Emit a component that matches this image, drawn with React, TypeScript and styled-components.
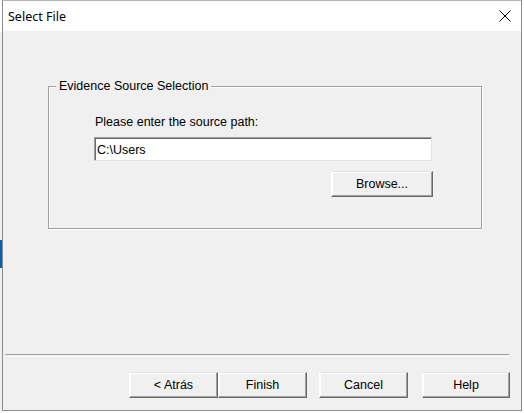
import React from 'react'
import styled, { createGlobalStyle } from 'styled-components'

const Global = createGlobalStyle`
  html, body {
    margin: 0;
    padding: 0;
    background: #fff;
  }
  body {
    font-family: "Liberation Sans", Arial, sans-serif;
    font-size: 12.5px;
    color: #000;
  }
`

const Screen = styled.div`
  display: flex;
  width: 524px;
  height: 413px;
  overflow: hidden;
`

/* the edge of the window behind the dialog */
const Backdrop = styled.div`
  width: 2px;
  display: flex;
  flex-direction: column;
  background: #f0f0f0;
`

const BackTop = styled.div`
  height: 32px;
  background: #fff;
`

const BackAccent = styled.div`
  margin-top: 208px;
  height: 28px;
  background: #0063b1;
`

const Window = styled.div`
  box-sizing: border-box;
  width: 520px;
  height: 411px;
  border: 1px solid #8c8c8c;
  border-top-color: #b4b4b4;
  display: flex;
  flex-direction: column;
`

const TitleBar = styled.div`
  height: 30px;
  flex: none;
  background: #fff;
  display: flex;
  align-items: center;
  justify-content: space-between;
  padding: 0 10px 0 5px;
`

const Title = styled.span`
  font-family: "Noto Sans", "Liberation Sans", sans-serif;
  font-size: 12.5px;
  color: #000;
`

const CloseButton = styled.button`
  border: 0;
  padding: 0;
  background: none;
  width: 13px;
  height: 13px;
  display: flex;
  align-items: center;
  justify-content: center;
`

const Body = styled.div`
  flex: 1;
  background: #f0f0f0;
  display: flex;
  flex-direction: column;
`

const GroupBox = styled.div`
  position: relative;
  box-sizing: border-box;
  margin: 55px 0 0 45px;
  width: 434px;
  height: 143px;
  border: 1px solid #a0a0a0;
  box-shadow: inset 1px 1px 0 #fff, 1px 1px 0 #fff;
  padding: 28px 0 0 45px;
`

const Legend = styled.span`
  position: absolute;
  top: -8px;
  left: 7px;
  padding: 0 3px;
  background: #f0f0f0;
  line-height: 14px;
`

const Field = styled.div`
  width: 338px;
  display: flex;
  flex-direction: column;
`

const Label = styled.label`
  padding-left: 1px;
  line-height: 14px;
  margin-bottom: 8px;
`

const PathInput = styled.input`
  box-sizing: border-box;
  width: 338px;
  height: 24px;
  margin: 0;
  padding: 1px 2px 0;
  font: inherit;
  background: #fff;
  border: 1px solid;
  border-color: #a0a0a0 #e3e3e3 #e3e3e3 #a0a0a0;
  box-shadow: inset 1px 1px 0 #696969;
  outline: none;
`

const Button = styled.button<{ $w?: number }>`
  box-sizing: border-box;
  width: ${p => p.$w ?? 89}px;
  height: 26px;
  margin: 0;
  padding: 0;
  font: inherit;
  color: #000;
  background: #f0f0f0;
  border: 1px solid;
  border-color: #e3e3e3 #696969 #696969 #fff;
  box-shadow: inset -1px -1px 0 #a0a0a0, inset 1px 1px 0 #fff;
`

const BrowseButton = styled(Button)`
  align-self: flex-end;
  margin: 10px -1px 0 0;
`

const Spacer = styled.div`
  flex: 1;
`

const Separator = styled.div`
  height: 1px;
  margin: 0 12px 0 2px;
  border-top: 1px solid #a0a0a0;
  border-bottom: 1px solid #fff;
`

const ButtonRow = styled.div`
  display: flex;
  justify-content: flex-end;
  padding: 15px 11px 12px 0;
`

const Gap = styled.div<{ $w: number }>`
  width: ${p => p.$w}px;
`

export default function App() {
  return (
    <Screen>
      <Global />
      <Backdrop>
        <BackTop />
        <BackAccent />
      </Backdrop>
      <Window>
        <TitleBar>
          <Title>Select File</Title>
          <CloseButton aria-label="Close">
            <svg width="12" height="12" viewBox="0 0 12 12">
              <path d="M0.5 0.5 L11.5 11.5 M11.5 0.5 L0.5 11.5" stroke="#000" strokeWidth="1" />
            </svg>
          </CloseButton>
        </TitleBar>
        <Body>
          <GroupBox>
            <Legend>Evidence Source Selection</Legend>
            <Field>
              <Label>Please enter the source path:</Label>
              <PathInput defaultValue="C:\Users" />
              <BrowseButton $w={102}>Browse...</BrowseButton>
            </Field>
          </GroupBox>
          <Spacer />
          <Separator />
          <ButtonRow>
            <Button>&lt; Atrás</Button>
            <Button>Finish</Button>
            <Gap $w={12} />
            <Button>Cancel</Button>
            <Gap $w={14} />
            <Button $w={88}>Help</Button>
          </ButtonRow>
        </Body>
      </Window>
    </Screen>
  )
}
